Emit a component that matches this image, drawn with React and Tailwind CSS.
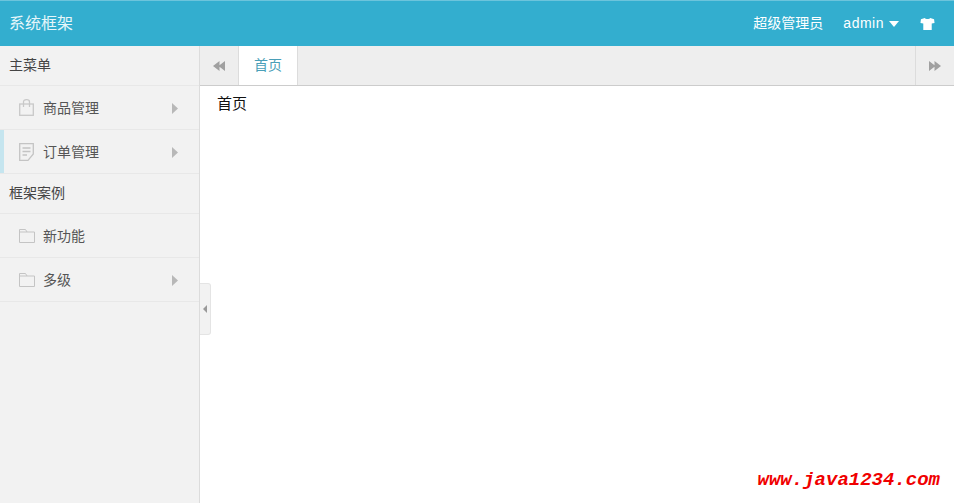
const sansCjk = "font-['Liberation_Sans','Noto_Sans_CJK_SC',sans-serif]";

function Chevron() {
  return (
    <svg width="6" height="11" viewBox="0 0 6 11" className="ml-auto mr-[21px] mt-[1px]">
      <path d="M0 0L6 5.5L0 11Z" fill="#b8b8b8" />
    </svg>
  );
}

function BagIcon() {
  return (
    <svg width="15" height="17" viewBox="0 0 15 17" fill="none" stroke="#c8c8c8" strokeWidth="1.3">
      <rect x="0.7" y="5" width="13.6" height="11.3" />
      <path d="M4.5 8V2.8C4.5 1.5 5.5 0.7 7.5 0.7C9.5 0.7 10.5 1.5 10.5 2.8V8" />
    </svg>
  );
}

function OrderIcon() {
  return (
    <svg width="15" height="18" viewBox="0 0 15 18" fill="none" stroke="#c4c4c4" strokeWidth="1.3">
      <path d="M0.7 0.7H14.3V11L9 17.3H0.7Z" />
      <path d="M3.5 5H11.5M3.5 8.5H11.5M3.5 12H8" />
    </svg>
  );
}

function FolderIcon() {
  return (
    <svg width="16" height="14" viewBox="0 0 16 14" fill="none" stroke="#c4c4c4" strokeWidth="1">
      <path d="M0.5 13.5V0.5H6.5L8 3H15.5V13.5Z" />
      <path d="M0.5 3H8" />
    </svg>
  );
}

function MenuGroup({ title }) {
  return (
    <div className="h-[40px] flex items-center pl-[9px] text-[14px] text-[#444] border-b border-[#e8e8e8]">
      {title}
    </div>
  );
}

function MenuItem({ icon, label, arrow, active }) {
  return (
    <div className="h-[44px] flex items-center pl-[19px] text-[14px] text-[#555] border-b border-[#e8e8e8] relative">
      {active && <span className="absolute left-0 top-0 bottom-0 w-[4px] bg-[#c5e5ef]" />}
      <span className="w-[24px] flex items-center">{icon}</span>
      <span className="pt-[1px]">{label}</span>
      {arrow && <Chevron />}
    </div>
  );
}

export default function App() {
  return (
    <div className={`h-[503px] flex flex-col bg-white overflow-hidden ${sansCjk}`}>
      <header className="h-[46px] shrink-0 flex items-center bg-[#33aecf] border-t border-[#6cc4dc] text-white">
        <div className="pl-[9px] text-[16px] text-[#e6f6fa]">系统框架</div>
        <div className="ml-auto flex items-center text-[14px]">
          <span>超级管理员</span>
          <span className="ml-[20px] tracking-[0.5px]">admin</span>
          <svg width="10" height="6" viewBox="0 0 10 6" className="ml-[5px]">
            <path d="M0 0H10L5 6Z" fill="#fff" />
          </svg>
          <svg width="15" height="14" viewBox="0 0 16 14" className="ml-[21px] mr-[19px]">
            <path d="M5 0.5L1 2L0.5 6L3.5 6.5V13.5H12.5V6.5L15.5 6L15 2L11 0.5C10 2 6 2 5 0.5Z" fill="#fff" />
          </svg>
        </div>
      </header>

      <div className="flex-1 flex min-h-0">
        <aside className="w-[200px] shrink-0 bg-[#f2f2f2] border-r border-[#dcdcdc]">
          <MenuGroup title="主菜单" />
          <MenuItem icon={<BagIcon />} label="商品管理" arrow />
          <MenuItem icon={<OrderIcon />} label="订单管理" arrow active />
          <MenuGroup title="框架案例" />
          <MenuItem icon={<FolderIcon />} label="新功能" />
          <MenuItem icon={<FolderIcon />} label="多级" arrow />
        </aside>

        <main className="flex-1 min-w-0 flex flex-col relative">
          <div className="h-[40px] shrink-0 flex bg-[#eeeeee] border-b border-[#cccccc]">
            <div className="w-[39px] flex items-center justify-center border-r border-[#dcdcdc]">
              <svg width="12" height="10" viewBox="0 0 12 10">
                <path d="M6.5 0V10L0 5ZM12 0V10L5.5 5Z" fill="#a0a0a0" />
              </svg>
            </div>
            <div className="w-[59px] flex items-center justify-center bg-white border-r border-[#dcdcdc] text-[14px] text-[#4a9fb8]">
              首页
            </div>
            <div className="ml-auto w-[39px] flex items-center justify-center border-l border-[#dcdcdc]">
              <svg width="12" height="10" viewBox="0 0 12 10">
                <path d="M0 0V10L6.5 5ZM5.5 0V10L12 5Z" fill="#a0a0a0" />
              </svg>
            </div>
          </div>
          <div className="pl-[17px] pt-[6px] text-[15px] leading-[24px] text-[#111]">首页</div>

          <div className="absolute left-0 top-[237px] w-[11px] h-[52px] flex items-center justify-center bg-[#f2f2f2] border border-l-0 border-[#e4e4e4] rounded-r-[3px]">
            <svg width="4" height="8" viewBox="0 0 4 8">
              <path d="M4 0V8L0 4Z" fill="#999" />
            </svg>
          </div>
          <div className="absolute right-[14px] bottom-[13px] font-['Liberation_Mono',monospace] italic font-bold text-[19px] leading-[20px] text-[#f00000]">
            www.java1234.com
          </div>
        </main>
      </div>
    </div>
  );
}
